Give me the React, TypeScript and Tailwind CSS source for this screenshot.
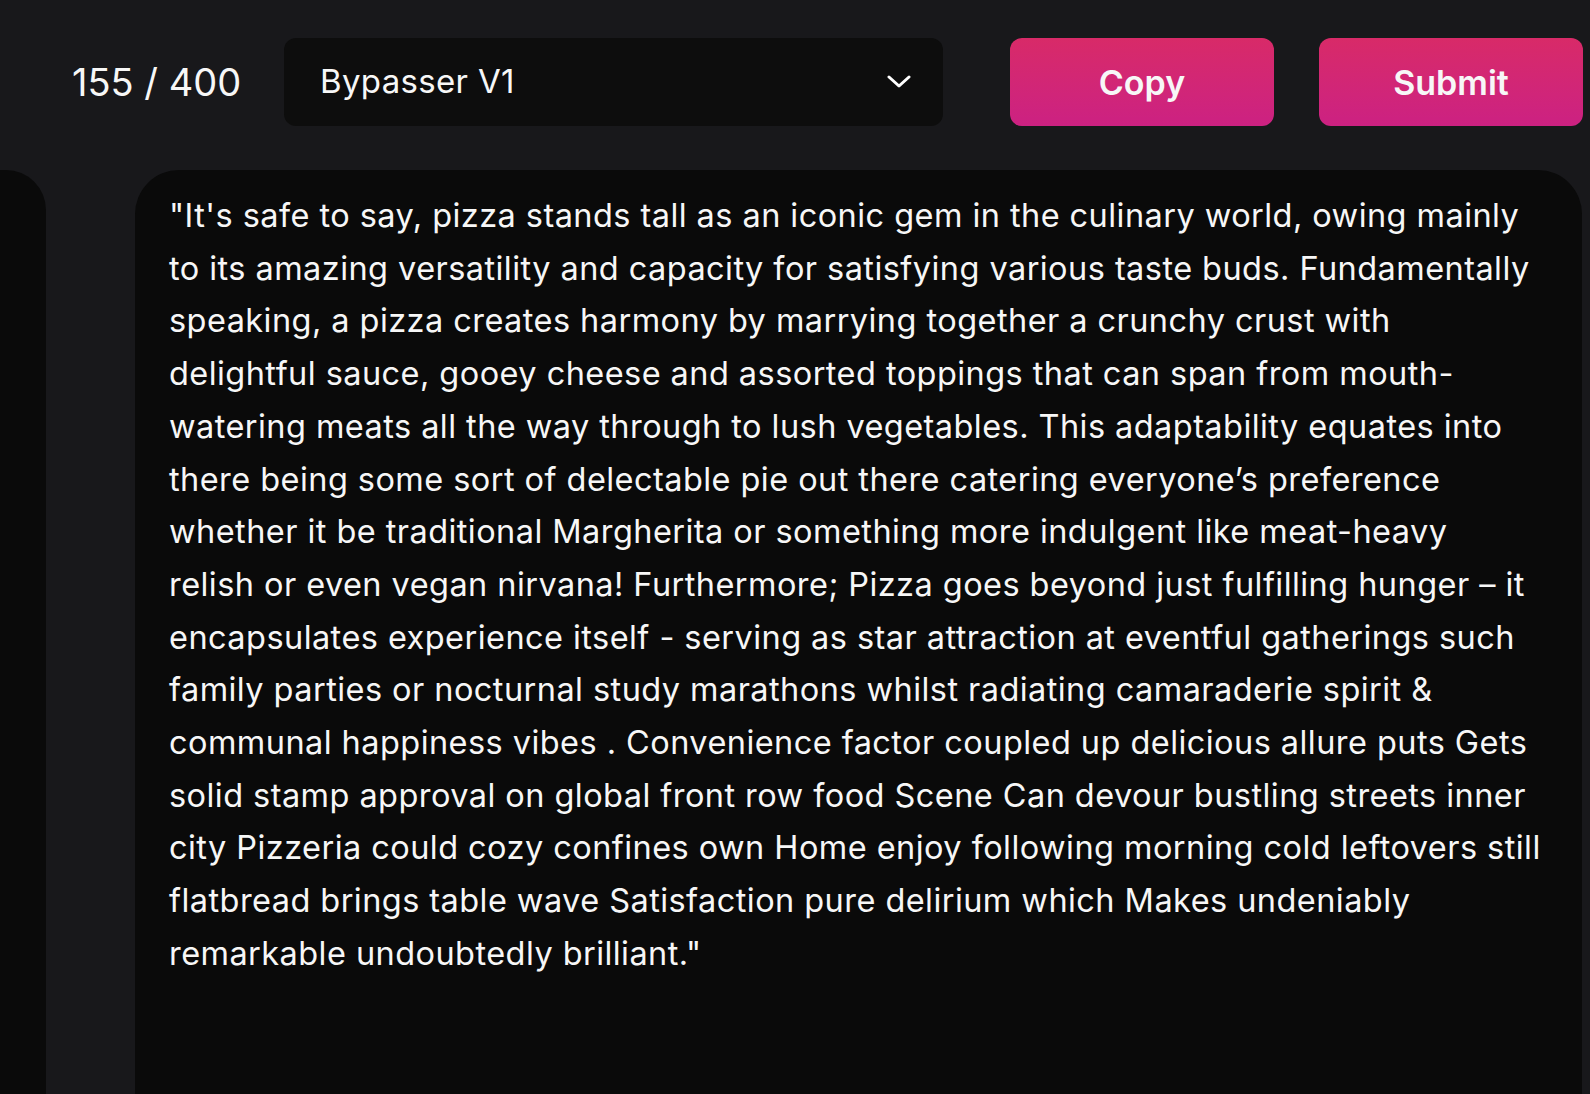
const TEXT_A =
  "\"It's safe to say, pizza stands tall as an iconic gem in the culinary world, owing mainly to its amazing versatility and capacity for satisfying various taste buds. Fundamentally speaking, a pizza creates harmony by marrying together a crunchy crust with delightful sauce, gooey cheese and assorted toppings that can span from mouth-watering meats all the way through to lush vegetables. This adaptability equates into there being some sort of delectable pie out there catering everyone’s preference whether it be traditional Margherita or something more indulgent like meat-heavy";
const TEXT_B =
  "relish or even vegan nirvana! Furthermore; Pizza goes beyond just fulfilling hunger – it encapsulates experience itself - serving as star attraction at eventful gatherings such family parties or nocturnal study marathons whilst radiating camaraderie spirit & communal happiness vibes . Convenience factor coupled up delicious allure puts Gets solid stamp approval on global front row food Scene Can devour bustling streets inner city Pizzeria could cozy confines own Home enjoy following morning cold leftovers still flatbread brings table wave Satisfaction pure delirium which Makes undeniably remarkable undoubtedly brilliant.\"";

function Chevron() {
  return (
    <svg width="24" height="14" viewBox="0 0 24 14" fill="none">
      <polyline
        points="2,2 12,11 22,2"
        stroke="white"
        strokeWidth="3"
        strokeLinecap="round"
        strokeLinejoin="round"
      />
    </svg>
  );
}

export default function App() {
  return (
    <div
      className="flex h-[1094px] w-[1590px] flex-col overflow-hidden bg-[#18181b] text-[#f7f7f7]"
      style={{ fontFamily: "Inter, 'Noto Sans', sans-serif" }}
    >
      <header className="mt-[38px] flex h-[88px] items-center pl-[72px]">
        <div className="w-[212px] text-[38px] leading-none">155 / 400</div>
        <button className="flex h-[88px] w-[659px] items-center justify-between rounded-[12px] bg-[#0d0d0d] pl-[36px] pr-[32px] text-[33px] tracking-[0.01em]">
          <span>Bypasser V1</span>
          <Chevron />
        </button>
        <button className="ml-[67px] h-[88px] w-[264px] rounded-[12px] bg-gradient-to-b from-[#d82a68] to-[#cc2182] text-[34px] font-semibold">
          Copy
        </button>
        <button className="ml-[45px] h-[88px] w-[264px] rounded-[12px] bg-gradient-to-b from-[#d82a68] to-[#cc2182] text-[34px] font-semibold">
          Submit
        </button>
      </header>

      <main className="mt-[44px] flex flex-1 gap-[89px] pr-[8px]">
        <aside className="w-[46px] rounded-tr-[40px] bg-[#0a0a0a]" />
        <section className="flex-1 rounded-t-[44px] bg-[#0a0a0a] pl-[34px] pr-[36px] pt-[20px]">
          <p className="text-[32.5px] leading-[52.7px] tracking-[0.0135em]">
            {TEXT_A}
            <br />
            {TEXT_B}
          </p>
        </section>
      </main>
    </div>
  );
}
